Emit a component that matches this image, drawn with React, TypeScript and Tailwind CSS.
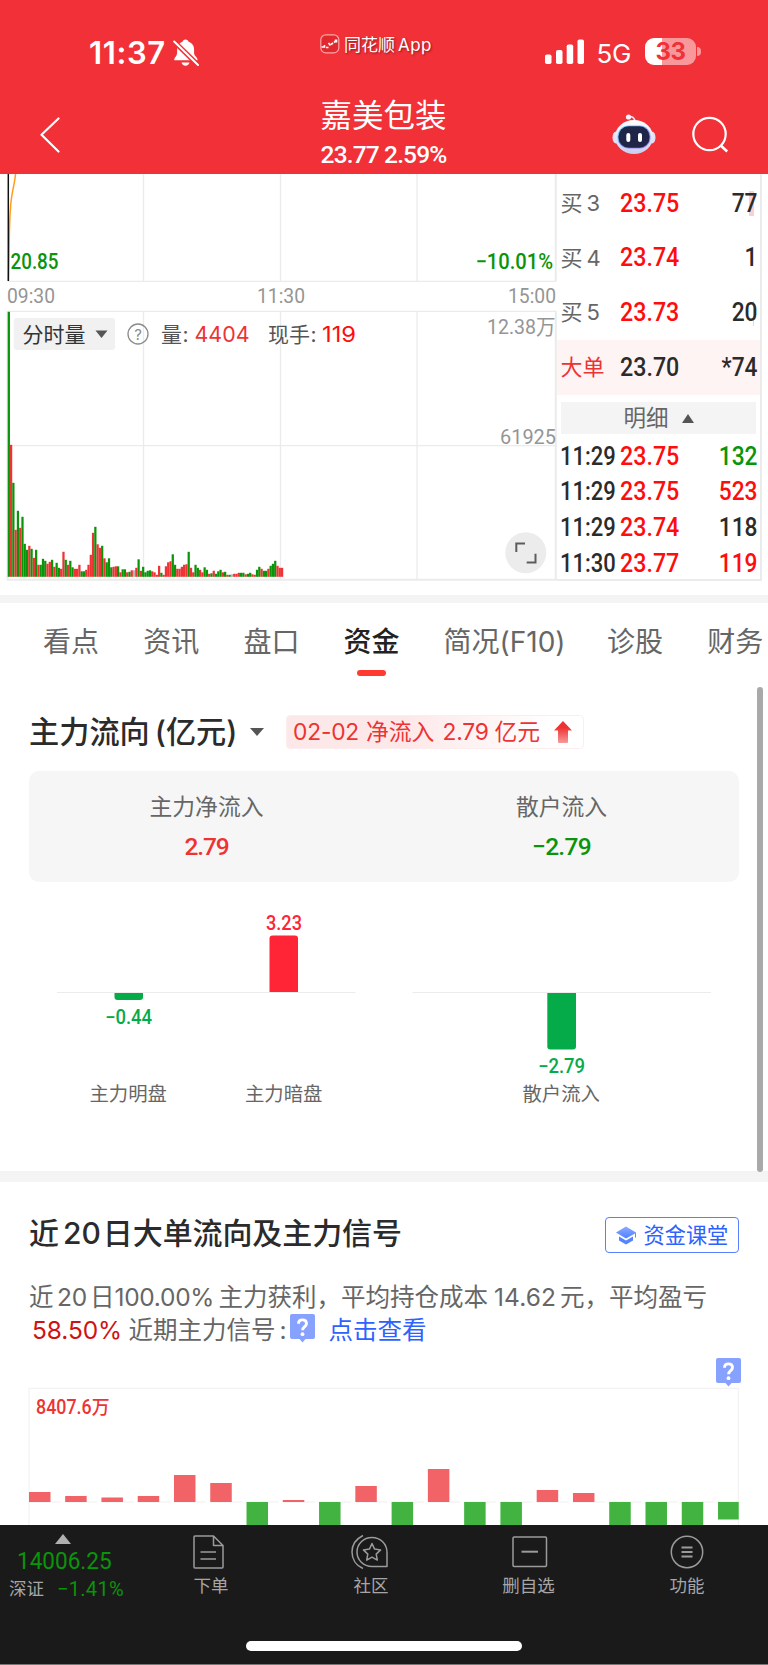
import type { ReactNode } from "react";

const RED = "#ed3333";
const GREEN = "#0a940a";
const GRAY = "#b4b4b4";

/* Minute volumes of the morning session: colour code + height. */
const VOLUMES =
  "g265 r132 g94 r47 g66 r49 g60 g33 g27 r31 g28 r19 g27 r12 g12 g18 g16 r13 r15 g17 r10 g14 g9 r8 r25 g17 r12 g16 g9.5 r8 r8 r12 g5.5 g5.5 r7 r12 r22 r44 g50 r32.5 r29 g31 r18.5 g14.5 g18.5 g9.5 r10 r10.5 g10.5 r4.5 g7.5 g7.5 r4.5 g5 r6.5 n6.5 r9 g17.5 r6 g10 g4.5 g6 g6.5 r5.5 r4.5 r2 r11 g4 r2 r10.5 r14.5 r15.5 g22.5 g12 r8 r8 r10 r12 r12.5 g25 r9 r4.5 g12 g9 r7 r4.5 g9.5 g7 r3 g3.5 r6 g3 g5.5 g7 r4.5 g5 r2 g2 n2.5 r3 r3 r4 g4 g4 r2.5 g3 g4 r2.5 r2 g7 g10 r8 g6 g6 r8 g11 g13 g16 r11 r9 r9".split(
    " ",
  );

const FLOWS = [10, 6, 4.5, 6, 27, 19, -40, 2, -40, 16, -40, 33, -40, -40, 12, 9, -40, -40, -40, -17.5];

function BellOff() {
  return (
    <svg width="26" height="28" viewBox="0 0 26 28" fill="#fff">
      <path d="M12.5 0.5c1.6 0 2.8 1 3 2.2 3.7 1 5.6 4.2 5.6 8v3.6c0 2.4 3.4 4.4 3.4 6.2v.8H1.2v-.8c0-1.8 2.9-3.6 2.9-6.2v-3.6c0-3.8 1.900-7 5.500-8 .2-1.200 1.300-2.200 2.900-2.200z" />
      <path d="M8.500 23.500h8c-.4 2-1.900 3.200-4 3.200s-3.600-1.200-4-3.200z" />
      <path d="M1 2.500 25 26" stroke="#f23037" strokeWidth="5" />
      <path d="M1.200 2.500 25 26" stroke="#fff" strokeWidth="2" strokeLinecap="round" />
    </svg>
  );
}

function Robot() {
  return (
    <svg width="44" height="42" viewBox="0 0 44 42">
      <defs>
        <linearGradient id="shell" x1="0" y1="0" x2="0" y2="1">
          <stop offset="0" stopColor="#ffffff" />
          <stop offset="1" stopColor="#c9cdf0" />
        </linearGradient>
        <linearGradient id="rim" x1="0" y1="0" x2="1" y2="1">
          <stop offset="0" stopColor="#6fd8ff" />
          <stop offset="1" stopColor="#9a6bf5" />
        </linearGradient>
      </defs>
      <path d="M23 9c0-4-2-5.500-6-5.500" fill="none" stroke="#e6e6f6" strokeWidth="1.600" />
      <circle cx="16.500" cy="4" r="2.600" fill="#f3f3ff" />
      <ellipse cx="4" cy="24.500" rx="3.500" ry="6" fill="#dfe1f5" />
      <ellipse cx="40" cy="24.500" rx="3.500" ry="6" fill="#dfe1f5" />
      <ellipse cx="22" cy="24" rx="19" ry="17" fill="url(#shell)" />
      <rect x="5.500" y="12.500" width="33" height="23" rx="11" fill="url(#rim)" />
      <rect x="6.500" y="13.300" width="31" height="21.400" rx="10" fill="#1f2547" />
      <rect x="14.300" y="20" width="4" height="9" rx="2" fill="#fff" />
      <rect x="26" y="20" width="4" height="9" rx="2" fill="#fff" />
    </svg>
  );
}

function HintTag() {
  return (
    <svg width="25" height="29" viewBox="0 0 25 29" className="block shrink-0">
      <path d="M2 0h21a2 2 0 0 1 2 2v21a2 2 0 0 1-2 2h-7.500l-3 3.500-3-3.500H2a2 2 0 0 1-2-2V2a2 2 0 0 1 2-2z" fill="#87a1ff" />
      <path d="M8.500 9.800c0-2.500 1.700-3.900 4-3.900s4 1.400 4 3.700c0 3-3.900 3.200-3.900 6.600" fill="none" stroke="#fff" strokeWidth="2.900" />
      <circle cx="12.500" cy="20.200" r="1.900" fill="#fff" />
    </svg>
  );
}

function Header() {
  return (
    <header className="h-[174px] shrink-0 bg-[#f23037] text-white">
      <div className="flex h-[84px] items-start">
        <div className="ml-[89px] mt-[35px] w-[84px] text-[31px] leading-[36px] font-semibold tracking-[0.6px]">11:37</div>
        <div className="mt-[39px] w-[147px]">
          <BellOff />
        </div>
        <svg width="20" height="20" viewBox="0 0 20 20" className="mt-[34px]">
          <rect x="0.800" y="0.800" width="18" height="18" rx="5" fill="#e2282f" stroke="#f9a5a7" strokeWidth="1.200" />
          <path d="M1.500 13h3v-2M6 13.500h2.500M8.500 9l2 2.500M11 10.500l2-1.500M14 8.500l1.500-1.500" stroke="#fff" strokeWidth="1.600" fill="none" />
          <path d="M14.800 5.500h2.500v3h-2.500z" fill="#fff" />
        </svg>
        <div className="ml-[4px] mt-[34px] w-[201px] text-[17px] leading-[22px] [text-shadow:1px_1px_2px_#8a1a1e]">
          同花顺<span className="ml-[3px] tracking-[0.4px]">App</span>
        </div>
        <svg width="39" height="25" viewBox="0 0 39 25" fill="#fff" className="mt-[39px]">
          <rect x="0" y="15.500" width="6.500" height="9.500" rx="1.800" />
          <rect x="11" y="11" width="6.500" height="14" rx="1.800" />
          <rect x="21.700" y="5.500" width="6.500" height="19.500" rx="1.800" />
          <rect x="32.500" y="0.500" width="6.500" height="24.500" rx="1.800" />
        </svg>
        <div className="ml-[12.500px] mt-[37px] w-[48.500px] text-[26px] leading-[34px] tracking-[-0.2px]">5G</div>
        <div className="mt-[38px] flex h-[27px] w-[51px] items-center justify-center rounded-[9px] bg-[linear-gradient(90deg,#fff_0_33%,#f8989b_33%)] text-[24px] leading-[27px] font-bold tracking-[-0.5px] text-[#f23037]">
          33
        </div>
        <div className="ml-[1px] mt-[47px] h-[9px] w-[4px] rounded-r-full bg-[#f8989b]" />
      </div>
      <div className="flex h-[90px] items-start">
        <svg width="20" height="36" viewBox="0 0 20 36" className="ml-[39.500px] mt-[33px]" fill="none" stroke="#fff" strokeWidth="2.200" strokeLinecap="round" strokeLinejoin="round">
          <path d="M18.500 1.500 1.500 17.700 18.500 34.500" />
        </svg>
        <div className="ml-[240px] mt-[12px] w-[168px]">
          <h1 className="w-[168px] text-center text-[31.500px] leading-[40px]">嘉美包装</h1>
          <p className="mt-[4px] text-center font-[Roboto] text-[24.500px] leading-[30px] font-medium tracking-[-0.85px]">23.77 2.59%</p>
        </div>
        <div className="ml-[144.500px] mt-[29px]">
          <Robot />
        </div>
        <svg width="38" height="38" viewBox="0 0 38 38" className="ml-[36px] mt-[32px]" fill="none" stroke="#fff" strokeWidth="2.200">
          <circle cx="17.500" cy="18" r="16.200" />
          <path d="M28.700 29.500 35.200 35.500" strokeWidth="2.600" />
        </svg>
      </div>
    </header>
  );
}

function IntradayChart() {
  return (
    <svg width="557" height="408" viewBox="0 174 557 408" className="block shrink-0 [font-family:Roboto,'Noto_Sans_CJK_SC',sans-serif]">
      <g stroke="#ebebeb" strokeWidth="1.300" fill="none">
        <path d="M143.500 174v107M280.500 174v107M417 174v107M8 281.300h548" />
        <path d="M143.500 311v269M280.500 311v269M417 311v269M8 311.300h548M8 445.700h548" />
        <path d="M7 579.800h550M555.800 174v107.500M555.800 311v269M7.500 311v269" strokeWidth="2" />
      </g>
      <path d="M15.500 174c-1 12-4.500 20-5 34C9 225 9.500 240 8.500 281" stroke="#ff9e1c" strokeWidth="1.500" fill="none" />
      <path d="M8.300 174V281" stroke="#111" strokeWidth="1.500" />
      <g fontSize="21.500" fontWeight="500" fill={GREEN}>
        <text x="10.500" y="269.200" textLength="48" lengthAdjust="spacingAndGlyphs">20.85</text>
        <text x="475.500" y="269.200" textLength="77.500" lengthAdjust="spacingAndGlyphs">−10.01%</text>
      </g>
      <g fontSize="21" fill="#959595">
        <text x="7" y="303" textLength="48" lengthAdjust="spacingAndGlyphs">09:30</text>
        <text x="257" y="303" textLength="48" lengthAdjust="spacingAndGlyphs">11:30</text>
        <text x="508" y="303" textLength="48" lengthAdjust="spacingAndGlyphs">15:00</text>
        <text x="487" y="334" textLength="68.500" lengthAdjust="spacingAndGlyphs">12.38万</text>
        <text x="500" y="444" textLength="56" lengthAdjust="spacingAndGlyphs">61925</text>
      </g>
      {VOLUMES.map((v, i) => {
        const h = Number(v.slice(1));
        const fill = v[0] === "g" ? GREEN : v[0] === "r" ? RED : GRAY;
        return <rect key={i} x={7.7 + i * 2.277} y={576.8 - h} width="2.250" height={h} fill={fill} />;
      })}
      <rect x="13.700" y="318" width="101.300" height="32" rx="3" fill="#f1f1f1" />
      <path d="M95.500 330.500h12l-6 7.500z" fill="#555" />
      <circle cx="138" cy="334" r="10" fill="none" stroke="#8c8c8c" strokeWidth="1.300" />
      <g className="[font-family:Inter,'Noto_Sans_CJK_SC',sans-serif]" fontSize="21">
        <text x="22.500" y="341.500" fill="#333" textLength="63" lengthAdjust="spacingAndGlyphs">分时量</text>
        <text x="138" y="339.500" fontSize="15" fill="#8c8c8c" textAnchor="middle">?</text>
        <text x="161" y="341.500" fill="#555">量</text>
        <text x="182.500" y="341.500" fill="#555">:</text>
        <text x="194.500" y="341.500" fill={RED} textLength="55" lengthAdjust="spacingAndGlyphs">4404</text>
        <text x="268" y="341.500" fill="#555">现手</text>
        <text x="310.500" y="341.500" fill="#555">:</text>
        <text x="322" y="341.500" fill="#ff0d0d" textLength="34" lengthAdjust="spacingAndGlyphs">119</text>
      </g>
      <circle cx="525.800" cy="552.700" r="20.500" fill="#ececec" />
      <path d="M516.300 552v-8.500h8.700M526.700 562.500h8.800v-8.700" fill="none" stroke="#5c5c5c" strokeWidth="2" />
    </svg>
  );
}

function QuoteRow({ label, price, qty, kind, mark }: { label: ReactNode; price: string; qty: string; kind?: "big"; mark?: ReactNode }) {
  const big = kind === "big";
  return (
    <div className={`relative flex h-[54.8px] items-center ${big ? "bg-[#fff4f4]" : ""}`}>
      {mark}
      <div className={`relative ml-[3.500px] w-[59.500px] text-[22px] whitespace-nowrap ${big ? "text-[#ed3333]" : "text-[#666]"}`}>{label}</div>
      <div className={`relative w-[64px] origin-left scale-x-[0.93] font-[Roboto] text-[25px] font-medium ${big ? "text-[#2b2b2b]" : "text-[#ff0d0d]"}`}>{price}</div>
      <div className="relative mr-[2.500px] flex-1 origin-right scale-x-[0.91] text-right font-[Roboto] text-[25px] font-medium text-[#2b2b2b]">{qty}</div>
    </div>
  );
}

function TickRow({ time, price, qty, tone }: { time: string; price: string; qty: string; tone: string }) {
  return (
    <div className="flex h-[35.700px] items-center font-[Roboto] text-[25px] font-medium">
      <div className="ml-[3px] w-[60px] origin-left scale-x-[0.88] text-[#2b2b2b]">{time}</div>
      <div className="w-[64px] origin-left scale-x-[0.93] text-[#ff0d0d]">{price}</div>
      <div className={`mr-[2.500px] flex-1 origin-right scale-x-[0.91] text-right ${tone}`}>{qty}</div>
    </div>
  );
}

function Quotes() {
  const level = (n: number) => (
    <>
      买<span className="ml-[4px]">{n}</span>
    </>
  );
  return (
    <div className="flex h-[407px] w-[205px] flex-col border-r-2 border-b-2 border-[#ebebeb]">
      <div className="mt-[2px]">
        <QuoteRow label={level(3)} price="23.75" qty="77" mark={<div className="absolute top-[15px] right-[6px] h-[25px] w-[5px] bg-[#fbd0d2]" />} />
        <QuoteRow label={level(4)} price="23.74" qty="1" />
        <QuoteRow label={level(5)} price="23.73" qty="20" mark={<div className="absolute top-[15px] right-[6px] h-[25px] w-px bg-[#fbd0d2]" />} />
        <QuoteRow label="大单" price="23.70" qty="*74" kind="big" />
      </div>
      <div className="mx-[4px] mt-[7px] mb-[4.500px] flex h-[32px] shrink-0 items-center justify-center gap-[13px] bg-[#f4f4f4] text-[22.500px] text-[#666]">
        明细
        <svg width="12" height="9" viewBox="0 0 12 9">
          <path d="M0 9 6 0l6 9z" fill="#555" />
        </svg>
      </div>
      <TickRow time="11:29" price="23.75" qty="132" tone="text-[#0a940a]" />
      <TickRow time="11:29" price="23.75" qty="523" tone="text-[#ff0d0d]" />
      <TickRow time="11:29" price="23.74" qty="118" tone="text-[#2b2b2b]" />
      <TickRow time="11:30" price="23.77" qty="119" tone="text-[#ff0d0d]" />
    </div>
  );
}

function Tabs() {
  const tab = "w-[100.200px] shrink-0 text-[#666]";
  return (
    <nav className="flex h-[76px] shrink-0 overflow-hidden pl-[43px] text-[28px] leading-[78px] whitespace-nowrap">
      <div className={tab}>看点</div>
      <div className={tab}>资讯</div>
      <div className={tab}>盘口</div>
      <div className="relative w-[100px] shrink-0 font-medium text-[#222]">
        资金
        <span className="absolute top-[67px] left-[13.500px] h-[6px] w-[29px] rounded-full bg-[#ff3a30]" />
      </div>
      <div className="w-[163.500px] shrink-0 text-[#666]">简况(F10)</div>
      <div className={tab}>诊股</div>
      <div className="shrink-0 text-[#666]">财务</div>
    </nav>
  );
}

function FlowBars() {
  return (
    <svg width="768" height="289" viewBox="0 882 768 289" className="block [font-family:Roboto,'Noto_Sans_CJK_SC',sans-serif]">
      <path d="M57 992.500h298.500M412.500 992.500H711" stroke="#ececec" />
      <path d="M114.500 993H143v4a3 3 0 0 1-3 3h-22.500a3 3 0 0 1-3-3z" fill="#06ab49" />
      <path d="M269.500 992v-53.500a3 3 0 0 1 3-3H295a3 3 0 0 1 3 3V992z" fill="#ff2436" />
      <path d="M547.300 993H576v53.500a3 3 0 0 1-3 3h-22.700a3 3 0 0 1-3-3z" fill="#06ab49" />
      <g fontSize="19.500" fontWeight="500">
        <text x="266" y="930" fill="#ff2436" textLength="36" lengthAdjust="spacingAndGlyphs">3.23</text>
        <text x="105" y="1023.500" fill="#06ab49" textLength="47" lengthAdjust="spacingAndGlyphs">−0.44</text>
        <text x="538" y="1073" fill="#06ab49" textLength="47" lengthAdjust="spacingAndGlyphs">−2.79</text>
      </g>
      <g fontSize="19" fill="#666">
        <text x="89.500" y="1101" textLength="77.500" lengthAdjust="spacingAndGlyphs">主力明盘</text>
        <text x="245" y="1101" textLength="77.500" lengthAdjust="spacingAndGlyphs">主力暗盘</text>
        <text x="522.500" y="1101" textLength="77.500" lengthAdjust="spacingAndGlyphs">散户流入</text>
      </g>
    </svg>
  );
}

function FundFlow() {
  return (
    <section className="relative h-[492px] shrink-0">
      <div className="flex h-[92px] items-center pt-[14px] pl-[29px]">
        <h2 className="w-[221px] text-[30.200px] leading-[40px] font-medium whitespace-nowrap text-[#2b2b2b]">
          主力流向<span className="ml-[5px]">(</span>亿元)
        </h2>
        <svg width="14" height="8" viewBox="0 0 14 8" className="mr-[22px]">
          <path d="M0 0h14L7 8z" fill="#555" />
        </svg>
        <div className="flex h-[34px] w-[298px] items-center rounded-[4px] border border-[#ffeced] bg-[linear-gradient(90deg,#fde8e9_40%,#fff_90%)] pl-[6px] text-[22.800px] leading-[32px] whitespace-nowrap text-[#ed3333]">
          <span className="w-[73px] tracking-[-0.2px]">02-02</span>
          <span className="w-[76.500px]">净流入</span>
          <span className="w-[52px] tracking-[-0.2px]">2.79</span>
          <span className="w-[59px]">亿元</span>
          <svg width="18" height="22" viewBox="0 0 18 22">
            <defs>
              <linearGradient id="up" x1="0" y1="0" x2="0" y2="1">
                <stop offset="0.300" stopColor="#ed3333" />
                <stop offset="1" stopColor="#f79a9a" />
              </linearGradient>
            </defs>
            <path d="M9 0l9 9.500h-4V21a1 1 0 0 1-1 1H5a1 1 0 0 1-1-1V9.500H0z" fill="url(#up)" />
          </svg>
        </div>
      </div>
      <div className="mx-[29px] grid h-[111px] grid-cols-2 rounded-[10px] bg-[#f6f6f6] text-center">
        <div>
          <div className="mt-[20px] text-[22.800px] leading-[32px] text-[#666]">主力净流入</div>
          <div className="mt-[9px] font-[Roboto] text-[24.500px] leading-[30px] font-medium tracking-[-1.1px] text-[#ed3333]">2.79</div>
        </div>
        <div>
          <div className="mt-[20px] text-[22.800px] leading-[32px] text-[#666]">散户流入</div>
          <div className="mt-[9px] font-[Roboto] text-[24.500px] leading-[30px] font-medium tracking-[-0.7px] text-[#0a940a]">−2.79</div>
        </div>
      </div>
      <FlowBars />
      <div className="absolute top-[7.500px] right-[5.500px] h-[485px] w-[5.500px] rounded-full bg-[#a9a9a9]" />
    </section>
  );
}

function DailyFlow() {
  return (
    <svg width="768" height="138" viewBox="0 1387 768 138" className="block shrink-0">
      <path d="M29 1526V1388.300H738.500V1526" fill="none" stroke="#f3f3f3" strokeWidth="1.300" />
      <path d="M29 1502H738.500" stroke="#efefef" strokeDasharray="32 4.270" />
      {FLOWS.map((v, i) => (
        <rect key={i} x={Math.max(29, 28.9 + i * 36.27)} y={v > 0 ? 1502 - v : 1502} width={i === 19 ? 20.7 : 21.5} height={Math.abs(v)} fill={v > 0 ? "#f16366" : "#42b340"} />
      ))}
      <text x="36" y="1413.500" fontSize="19.500" fontWeight="500" fill={RED} textLength="73.500" lengthAdjust="spacingAndGlyphs" className="[font-family:Roboto,'Noto_Sans_CJK_SC',sans-serif]">
        8407.6万
      </text>
    </svg>
  );
}

function SignalPanel() {
  return (
    <section className="flex h-[343px] shrink-0 flex-col overflow-hidden">
      <div className="flex h-[99px] items-start justify-between px-[29px]">
        <h2 className="mt-[31px] text-[30px] leading-[40px] font-medium whitespace-nowrap text-[#2b2b2b]">
          近<span className="mr-[2px] ml-[4px]">20</span>
          <span className="tracking-[-0.1px]">日大单流向及主力信号</span>
        </h2>
        <div className="mt-[35px] flex h-[36px] w-[134px] items-center rounded-[4px] border border-[#5580ff] pl-[10px] text-[21.200px] leading-[32px] whitespace-nowrap text-[#2d62ff]">
          <svg width="20" height="19" viewBox="0 0 20 19" className="mr-[7.500px] shrink-0">
            <defs>
              <linearGradient id="mortar" x1="0" y1="0" x2="0" y2="1">
                <stop offset="0" stopColor="#8dabff" />
                <stop offset="1" stopColor="#4f80ff" />
              </linearGradient>
            </defs>
            <path d="M10 0.500 20 6.500v5h-1V7.500L10 12.500 0 6.500z" fill="url(#mortar)" />
            <path d="M3 10.500l7 4 7-4v4l-7 4-7-4z" fill="#5584ff" />
          </svg>
          资金课堂
        </div>
      </div>
      <div className="pl-[29px] text-[24.500px] leading-[32.500px] whitespace-nowrap text-[#666]">
        <div className="flex">
          <span className="w-[28px]">近</span>
          <span className="w-[33px] tracking-[-0.2px]">20</span>
          <span className="w-[24.500px]">日</span>
          <span className="w-[104px] tracking-[-0.3px]">100.00%</span>
          <span className="w-[275.500px]">主力获利，平均持仓成本</span>
          <span className="w-[66px] tracking-[0.1px]">14.62</span>
          <span>元，平均盈亏</span>
        </div>
        <div className="flex">
          <span className="ml-[3px] w-[96.500px] tracking-[-0.1px] text-[#d01212]">58.50%</span>
          <span className="w-[151px]">近期主力信号</span>
          <span className="w-[10px]">:</span>
          <span className="mt-[0.500px] w-[39px]">
            <HintTag />
          </span>
          <span className="text-[#2d62ff]">点击查看</span>
        </div>
      </div>
      <div className="mt-[12px] flex h-[29px] justify-end pr-[27px]">
        <HintTag />
      </div>
      <DailyFlow />
    </section>
  );
}

function NavItem({ icon, label, className }: { icon: ReactNode; label: string; className: string }) {
  return (
    <div className={`flex shrink-0 flex-col items-center ${className}`}>
      <div className="mt-[9px] flex h-[36px] items-center">{icon}</div>
      <div className="mt-[4px] text-[17.500px] leading-[24px] text-[#a6a6a6]">{label}</div>
    </div>
  );
}

function BottomBar() {
  const line = { fill: "none", stroke: "#9b9b9b", strokeWidth: 1.5, strokeLinejoin: "round" as const };
  return (
    <footer className="flex h-[140px] shrink-0 flex-col bg-[#1a1a1a]">
      <div className="flex h-[116px]">
        <div className="w-[130px] shrink-0 pl-[9px]">
          <svg width="16" height="10" viewBox="0 0 16 10" className="mt-[9px] ml-[46px] block">
            <path d="M0 10 8 0l8 10z" fill="#b0b0b0" />
          </svg>
          <div className="mt-[2px] ml-[7.500px] origin-left scale-x-[0.92] font-[Roboto] text-[24.500px] leading-[30px] text-[#0a940a]">14006.25</div>
          <div className="mt-[-1px] flex h-[28px] items-center whitespace-nowrap">
            <span className="w-[48px] text-[17.500px] text-[#a6a6a6]">深证</span>
            <span className="font-[Roboto] text-[20px] tracking-[0.3px] text-[#0a940a]">−1.41%</span>
          </div>
        </div>
        <NavItem
          className="ml-[41px] w-[80px]"
          label="下单"
          icon={
            <svg width="34" height="34" viewBox="1 0 34 34" className="mr-[2px]" {...line}>
              <path d="M21.500 1H3a1 1 0 0 0-1 1v30a1 1 0 0 0 1 1h27a1 1 0 0 0 1-1V10.500zV10.500H31M8.500 17h15.500M8.500 24h15.500" />
            </svg>
          }
        />
        <NavItem
          className="ml-[80px] w-[80px]"
          label="社区"
          icon={
            <svg width="38" height="36" viewBox="0 0 38 36" className="mr-[2px]" {...line}>
              <path d="M21 3.500c8.500 0 15 6.500 15 15V32.500H21c-8.500 0-15-6.500-15-14.500s6.500-14.500 15-14.500z" />
              <path d="M12 1.500C5 5 1 11 1 18s4 13.500 11 16.500" />
              <path d="M21 9.500l2.600 5.600 6 .8-4.400 4.200 1.100 6-5.300-3-5.300 3 1.100-6-4.400-4.200 6-.8z" />
            </svg>
          }
        />
        <NavItem
          className="ml-[77.500px] w-[80px]"
          label="删自选"
          icon={
            <svg width="36" height="32" viewBox="0 0 36 32" className="ml-[3px]" {...line}>
              <rect x="1" y="1" width="33.500" height="29.500" rx="1.200" />
              <path d="M9.500 15.700h16.500" strokeWidth="2" />
            </svg>
          }
        />
        <NavItem
          className="ml-[78.500px] w-[80px]"
          label="功能"
          icon={
            <svg width="34" height="34" viewBox="0 0 34 34" {...line}>
              <circle cx="17" cy="17" r="15.700" />
              <path d="M11.500 12.500h11M11.500 17h11M11.500 21.500h11" strokeWidth="1.800" />
            </svg>
          }
        />
      </div>
      <div className="mx-auto h-[9.500px] w-[275.500px] rounded-full bg-white" />
      <div className="mt-auto h-px bg-[#777]" />
    </footer>
  );
}

export default function App() {
  return (
    <main className="flex h-[1665px] w-[768px] flex-col overflow-hidden bg-white [font-family:Inter,'Noto_Sans_CJK_SC',sans-serif]">
      <Header />
      <div className="flex h-[421px] shrink-0">
        <IntradayChart />
        <Quotes />
      </div>
      <div className="h-[8px] shrink-0 bg-[#f4f4f4]" />
      <Tabs />
      <FundFlow />
      <div className="h-[11px] shrink-0 bg-[#f4f4f4]" />
      <SignalPanel />
      <BottomBar />
    </main>
  );
}
